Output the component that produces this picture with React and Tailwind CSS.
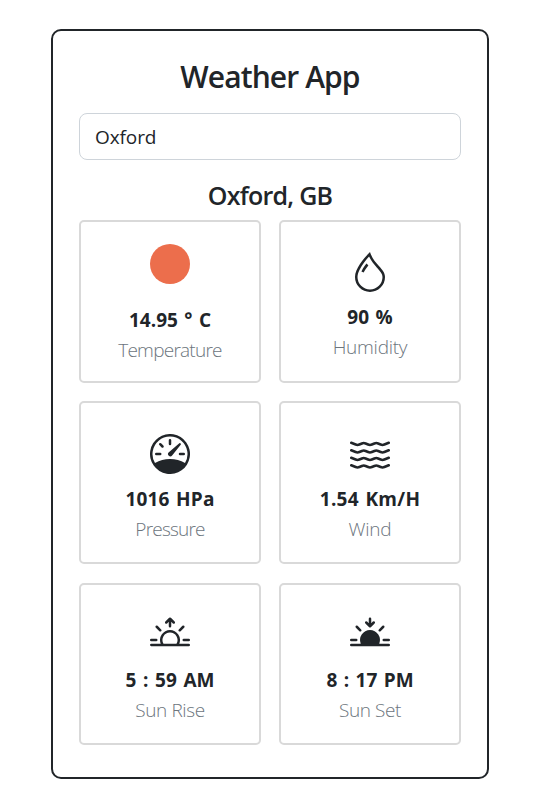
import React from "react";
import { BsDroplet, BsSpeedometer, BsWater, BsSunrise, BsSunsetFill } from "react-icons/bs";

const readings = [
  { label: "Temperature", value: "14.95 ° C", labelClass: "tracking-[-0.75px]", valueClass: "[word-spacing:1.5px]" },
  { label: "Humidity", value: "90 %", Icon: BsDroplet, labelClass: "tracking-[-0.25px]", valueClass: "[word-spacing:1.5px]" },
  { label: "Pressure", value: "1016 HPa", Icon: BsSpeedometer, labelClass: "tracking-[-0.8px]", valueClass: "tracking-[0.15px] [word-spacing:1.5px]" },
  { label: "Wind", value: "1.54 Km/H", Icon: BsWater, labelClass: "tracking-[-0.25px]", valueClass: "tracking-[0.25px] [word-spacing:1.5px]" },
  { label: "Sun Rise", value: "5 : 59 AM", Icon: BsSunrise, labelClass: "tracking-[-0.4px]", valueClass: "[word-spacing:1.7px]" },
  { label: "Sun Set", value: "8 : 17 PM", Icon: BsSunsetFill, labelClass: "tracking-[-0.4px]", valueClass: "[word-spacing:1.5px]" },
];

function Card({ label, value, Icon, labelClass, valueClass }) {
  return (
    <div className="flex h-[162.6px] flex-col items-center rounded-[5px] border-2 border-[#d9d9d9]">
      {Icon ? (
        <Icon className="mt-[30.25px] size-10 shrink-0" />
      ) : (
        <div className="mt-[22px] mb-[11px] size-10 shrink-0 rounded-full bg-[#ec6e4c]" />
      )}
      <p className={"mt-[10px] h-[30px] text-[19px] leading-[30px] font-bold whitespace-pre " + valueClass}>{value}</p>
      <p className={"h-[30px] text-[19px] leading-[30px] font-light text-[#6c757d] " + labelClass}>{label}</p>
    </div>
  );
}

export default function App() {
  return (
    <div className="h-[802px] bg-white pt-[29px] pl-[51px] font-['Open_Sans','Noto_Sans',sans-serif] text-[#212529]">
      <main className="flex h-[750px] w-[438px] flex-col rounded-[10px] border-2 border-[#212529] px-[26px] pt-[26px]">
        <h1 className="h-[40px] text-center text-[30px] leading-[40px] font-semibold tracking-[-0.9px]">Weather App</h1>
        <input
          className="mt-4 h-[47px] w-full shrink-0 rounded-lg border border-[#ced4da] px-[15px] text-[19px] tracking-[-0.1px] outline-none"
          defaultValue="Oxford"
        />
        <h2 className="mt-[19px] h-[32px] text-center text-[25px] leading-[32px] font-semibold tracking-[-0.75px]">Oxford, GB</h2>
        <section className="mt-[9px] grid grid-cols-2 gap-x-[18px] gap-y-[18.75px]">
          {readings.map((r) => (
            <Card key={r.label} {...r} />
          ))}
        </section>
      </main>
    </div>
  );
}
